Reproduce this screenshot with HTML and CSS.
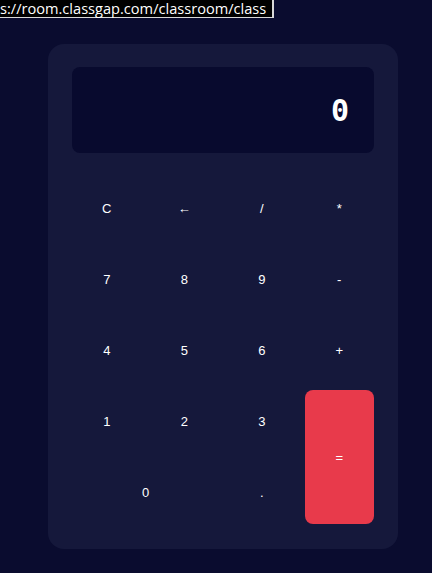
FILE: index.html
```html
<!DOCTYPE html>
<html>
<head>
<meta charset="utf-8">
<link rel="stylesheet" href="styles.css">
</head>
<body>
<div class="status-url">s://room.classgap.com/classroom/class</div>
<main class="page">
  <div class="calc">
    <div class="display">0</div>
    <div class="keys">
      <button class="key">C</button>
      <button class="key">←</button>
      <button class="key">/</button>
      <button class="key">*</button>
      <button class="key">7</button>
      <button class="key">8</button>
      <button class="key">9</button>
      <button class="key">-</button>
      <button class="key">4</button>
      <button class="key">5</button>
      <button class="key">6</button>
      <button class="key">+</button>
      <button class="key">1</button>
      <button class="key">2</button>
      <button class="key">3</button>
      <button class="key key-equals">=</button>
      <button class="key key-zero">0</button>
      <button class="key">.</button>
    </div>
  </div>
</main>
</body>
</html>
```
FILE: styles.css
```css
html, body {
  margin: 0;
  padding: 0;
  background: #0a0c2f;
  height: 100%;
}
body {
  font-family: "Liberation Sans", Arial, sans-serif;
}
.page {
  padding: 44px 0 0 48px;
}
.calc {
  width: 302px;
  padding: 23px 24px 25px;
  background: #15183b;
  border-radius: 16px;
}
.display {
  height: 86px;
  box-sizing: border-box;
  background: #080a2e;
  border-radius: 8px;
  padding: 0 25px 0 24px;
  display: flex;
  align-items: center;
  justify-content: flex-end;
  color: #ffffff;
  font-family: "DejaVu Sans Mono", monospace;
  font-weight: bold;
  font-size: 30px;
  margin-bottom: 24px;
}
.keys {
  display: grid;
  grid-template-columns: repeat(4, 1fr);
  grid-auto-rows: 63px;
  gap: 8px;
}
.key {
  background: transparent;
  border: none;
  border-radius: 8px;
  color: #ffffff;
  font-family: "Liberation Sans", Arial, sans-serif;
  font-size: 13px;
  padding: 0;
  margin: 0;
}
.key-equals {
  grid-column: 4;
  grid-row: 4 / span 2;
  background: #e83a4b;
}
.key-zero {
  grid-column: 1 / span 2;
}
.status-url {
  position: absolute;
  top: 0;
  left: 0;
  height: 17px;
  width: 272px;
  background: #000000;
  color: #ffffff;
  border-right: 2px solid #d8d8d8;
  border-bottom: 1px solid #d8d8d8;
  font-family: "Open Sans", sans-serif;
  font-size: 14.6px;
  line-height: 17px;
  white-space: nowrap;
}
```
